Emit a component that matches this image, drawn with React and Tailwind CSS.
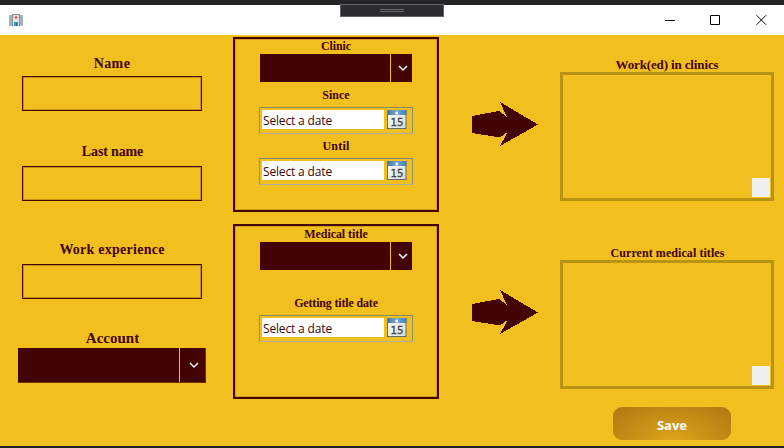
import React from "react";

function Label({ children, className }) {
  return (
    <div
      className={`h-4 whitespace-nowrap text-center font-['Liberation_Serif',serif] font-bold leading-4 text-[#430303] ${className}`}
    >
      {children}
    </div>
  );
}

function Field({ label, labelClass, className }) {
  return (
    <div className={className}>
      <Label className={labelClass}>{label}</Label>
      <div className="ml-[22px] h-[35px] w-[180px] border border-[#430303] shadow-[inset_0_0_0_1px_#c6931a]" />
    </div>
  );
}

function Chevron() {
  return (
    <svg width="10" height="8" viewBox="0 0 10 8" fill="none" stroke="#fff" strokeWidth="1.5">
      <path d="M1 2 5 6 9 2" />
    </svg>
  );
}

function Select({ className, buttonClass }) {
  return (
    <div className={`flex bg-[#430303] ${className}`}>
      <div className="flex-1" />
      <div className={`flex items-center justify-center border-l border-[#f2c01e] ${buttonClass}`}>
        <Chevron />
      </div>
    </div>
  );
}

function CalendarIcon() {
  return (
    <svg width="20" height="20" viewBox="0 0 20 20">
      <defs>
        <linearGradient id="calendarTop" x1="0" x2="1" y1="0" y2="0">
          <stop offset="0" stopColor="#3f76a8" />
          <stop offset="0.5" stopColor="#75a9cf" />
          <stop offset="1" stopColor="#477fae" />
        </linearGradient>
        <linearGradient id="calendarPage" x1="0" x2="1" y1="0" y2="1">
          <stop offset="0" stopColor="#fff" />
          <stop offset="1" stopColor="#d5d6d8" />
        </linearGradient>
      </defs>
      <rect x="0.5" y="0.5" width="18.5" height="18" fill="url(#calendarPage)" stroke="#66696d" />
      <rect x="0" y="0" width="19.5" height="5" fill="url(#calendarTop)" />
      <circle cx="9.8" cy="3" r="1.5" fill="#fff" />
      <text
        x="3.5"
        y="16.4"
        fill="#444"
        stroke="#444"
        strokeWidth="0.3"
        className="font-['DejaVu_Sans',sans-serif] text-[10.5px]"
        textLength="13"
        lengthAdjust="spacingAndGlyphs"
      >
        15
      </text>
    </svg>
  );
}

function DatePicker({ className }) {
  return (
    <div className={`ml-6 flex h-[27px] w-[154px] border border-b-[#aaaeb0] border-l-[#918f68] border-r-[#918f68] border-t-[#7f8874] pl-0.5 pt-0.5 ${className}`}>
      <div className="h-[19px] w-[122px] whitespace-nowrap bg-white pl-px font-['Open_Sans',sans-serif] text-[12px] leading-[21px] tracking-[-0.16px] text-[#430303]">
        Select a date
      </div>
      <div className="ml-[3px] h-5 w-5">
        <CalendarIcon />
      </div>
    </div>
  );
}

function Arrow() {
  return (
    <svg width="66" height="45" viewBox="0 0 66 45" shapeRendering="crispEdges">
      <path d="M0 14 27 9 35 15 28 0 66 22.5 28 44 36 29.5 28 35.5 0 31Z" fill="#430303" />
    </svg>
  );
}

function ListBox() {
  return (
    <div className="flex h-[129px] w-[214px] items-end justify-end border-[3px] border-[#b89214] pb-px pr-px">
      <div className="h-[19px] w-[18px] bg-[#f0f0f0]" />
    </div>
  );
}

function HospitalIcon() {
  return (
    <svg width="14" height="12" viewBox="0 0 14 12" shapeRendering="crispEdges">
      <path d="M0 1h3v11H0zM11 1h3v11h-3z" fill="#a4b7c2" />
      <path d="M1 3h1v1H1zM1 5h1v1H1zM1 7h1v1H1zM1 9h1v1H1zM12 3h1v1h-1zM12 5h1v1h-1zM12 7h1v1h-1zM12 9h1v1h-1z" fill="#7ba9bf" />
      <path d="M3 0h8v12H3z" fill="#8c8c8c" />
      <path d="M4 1h6v11H4z" fill="#e5e5e5" />
      <path d="M6 2h2v1h1v1H8v1H6V4H5V3h1z" fill="#dd7a6c" />
      <path d="M5 8h4v4H5z" fill="#1aa3d8" />
      <path d="M7 9h1v3H7z" fill="#176d95" />
    </svg>
  );
}

function TitleBar() {
  return (
    <div className="flex h-[30px] items-center bg-white pl-[9px] pr-[17px]">
      <HospitalIcon />
      <svg className="ml-auto" width="102" height="10" viewBox="0 0 102 10" fill="none" stroke="#000">
        <path d="M0 5.5h10" />
        <path d="M45.5.5h9v9h-9z" />
        <path d="m91.5.2 9.6 9.6M101.1.2 91.5 9.8" />
      </svg>
    </div>
  );
}

export default function App() {
  return (
    <div className="relative flex h-[448px] w-[784px] flex-col overflow-hidden bg-[#f2c01e]">
      <div className="h-[5px] bg-[#242426]" />
      <TitleBar />
      <div className="absolute left-[340px] top-1 flex h-[13px] w-[104px] flex-col items-center border border-[#656568] bg-[#2c2c2e] pt-1">
        <div className="h-[3px] w-6 border-y border-[#68686a]" />
      </div>

      <main className="flex h-[411px]">
        <section className="w-[224px] pt-[21px]">
          <Field label="Name" labelClass="mb-1 text-[14px] tracking-[0.4px]" />
          <Field label="Last name" labelClass="mb-[6px] text-[14px] tracking-[-0.15px] pl-px" className="mt-[33px]" />
          <Field label="Work experience" labelClass="mb-[6px] text-[14px] tracking-[0.25px]" className="mt-[41px]" />
          <Label className="mt-[31px] pl-px text-[15px]">Account</Label>
          <Select className="ml-[18px] mt-0.5 h-[35px] w-[188px] border-b border-r border-[#713108]" buttonClass="w-[26px] pl-0.5" />
        </section>

        <section className="ml-[9px] w-[206px] pt-0.5">
          <div className="h-[175px] border-2 border-[#430303] shadow-[inset_0_0_0_1px_#d49d19]">
            <Label className="-mt-px text-[12px] tracking-[-0.1px]">Clinic</Label>
            <Select className="ml-[25px] h-7 w-[152px]" buttonClass="w-[22px] pl-0.5" />
            <Label className="mt-[5px] text-[12px]">Since</Label>
            <DatePicker className="mt-1" />
            <Label className="mt-1 text-[12px] tracking-[0.2px]">Until</Label>
            <DatePicker className="mt-1" />
          </div>
          <div className="mt-3 h-[175px] border-2 border-[#430303] shadow-[inset_0_0_0_1px_#d49d19]">
            <Label className="text-[12px] tracking-[-0.06px]">Medical title</Label>
            <Select className="ml-[25px] h-7 w-[152px]" buttonClass="w-[22px] pl-0.5" />
            <Label className="mt-[25px] text-[12px] tracking-[-0.17px]">Getting title date</Label>
            <DatePicker className="mt-1" />
          </div>
        </section>

        <section className="ml-[33px] flex w-[66px] flex-col gap-[143px] pt-[67px]">
          <Arrow />
          <Arrow />
        </section>

        <section className="ml-[22px] w-[214px] pt-[22px]">
          <Label className="-mb-px text-[13px] tracking-[-0.13px]">Work(ed) in clinics</Label>
          <ListBox />
          <Label className="-mb-px mt-11 pl-px text-[12px] tracking-[0.07px]">Current medical titles</Label>
          <ListBox />
          <button className="ml-[53px] mt-[18px] block h-[33px] w-[118px] rounded-[9px] bg-[radial-gradient(ellipse_at_50%_110%,#dea61b_0%,#b27a12_95%)] font-['Open_Sans',sans-serif] text-[13px] font-bold leading-[37px] text-white">
            Save
          </button>
        </section>
      </main>
      <div className="h-[2px] bg-[#242426]" />
    </div>
  );
}
